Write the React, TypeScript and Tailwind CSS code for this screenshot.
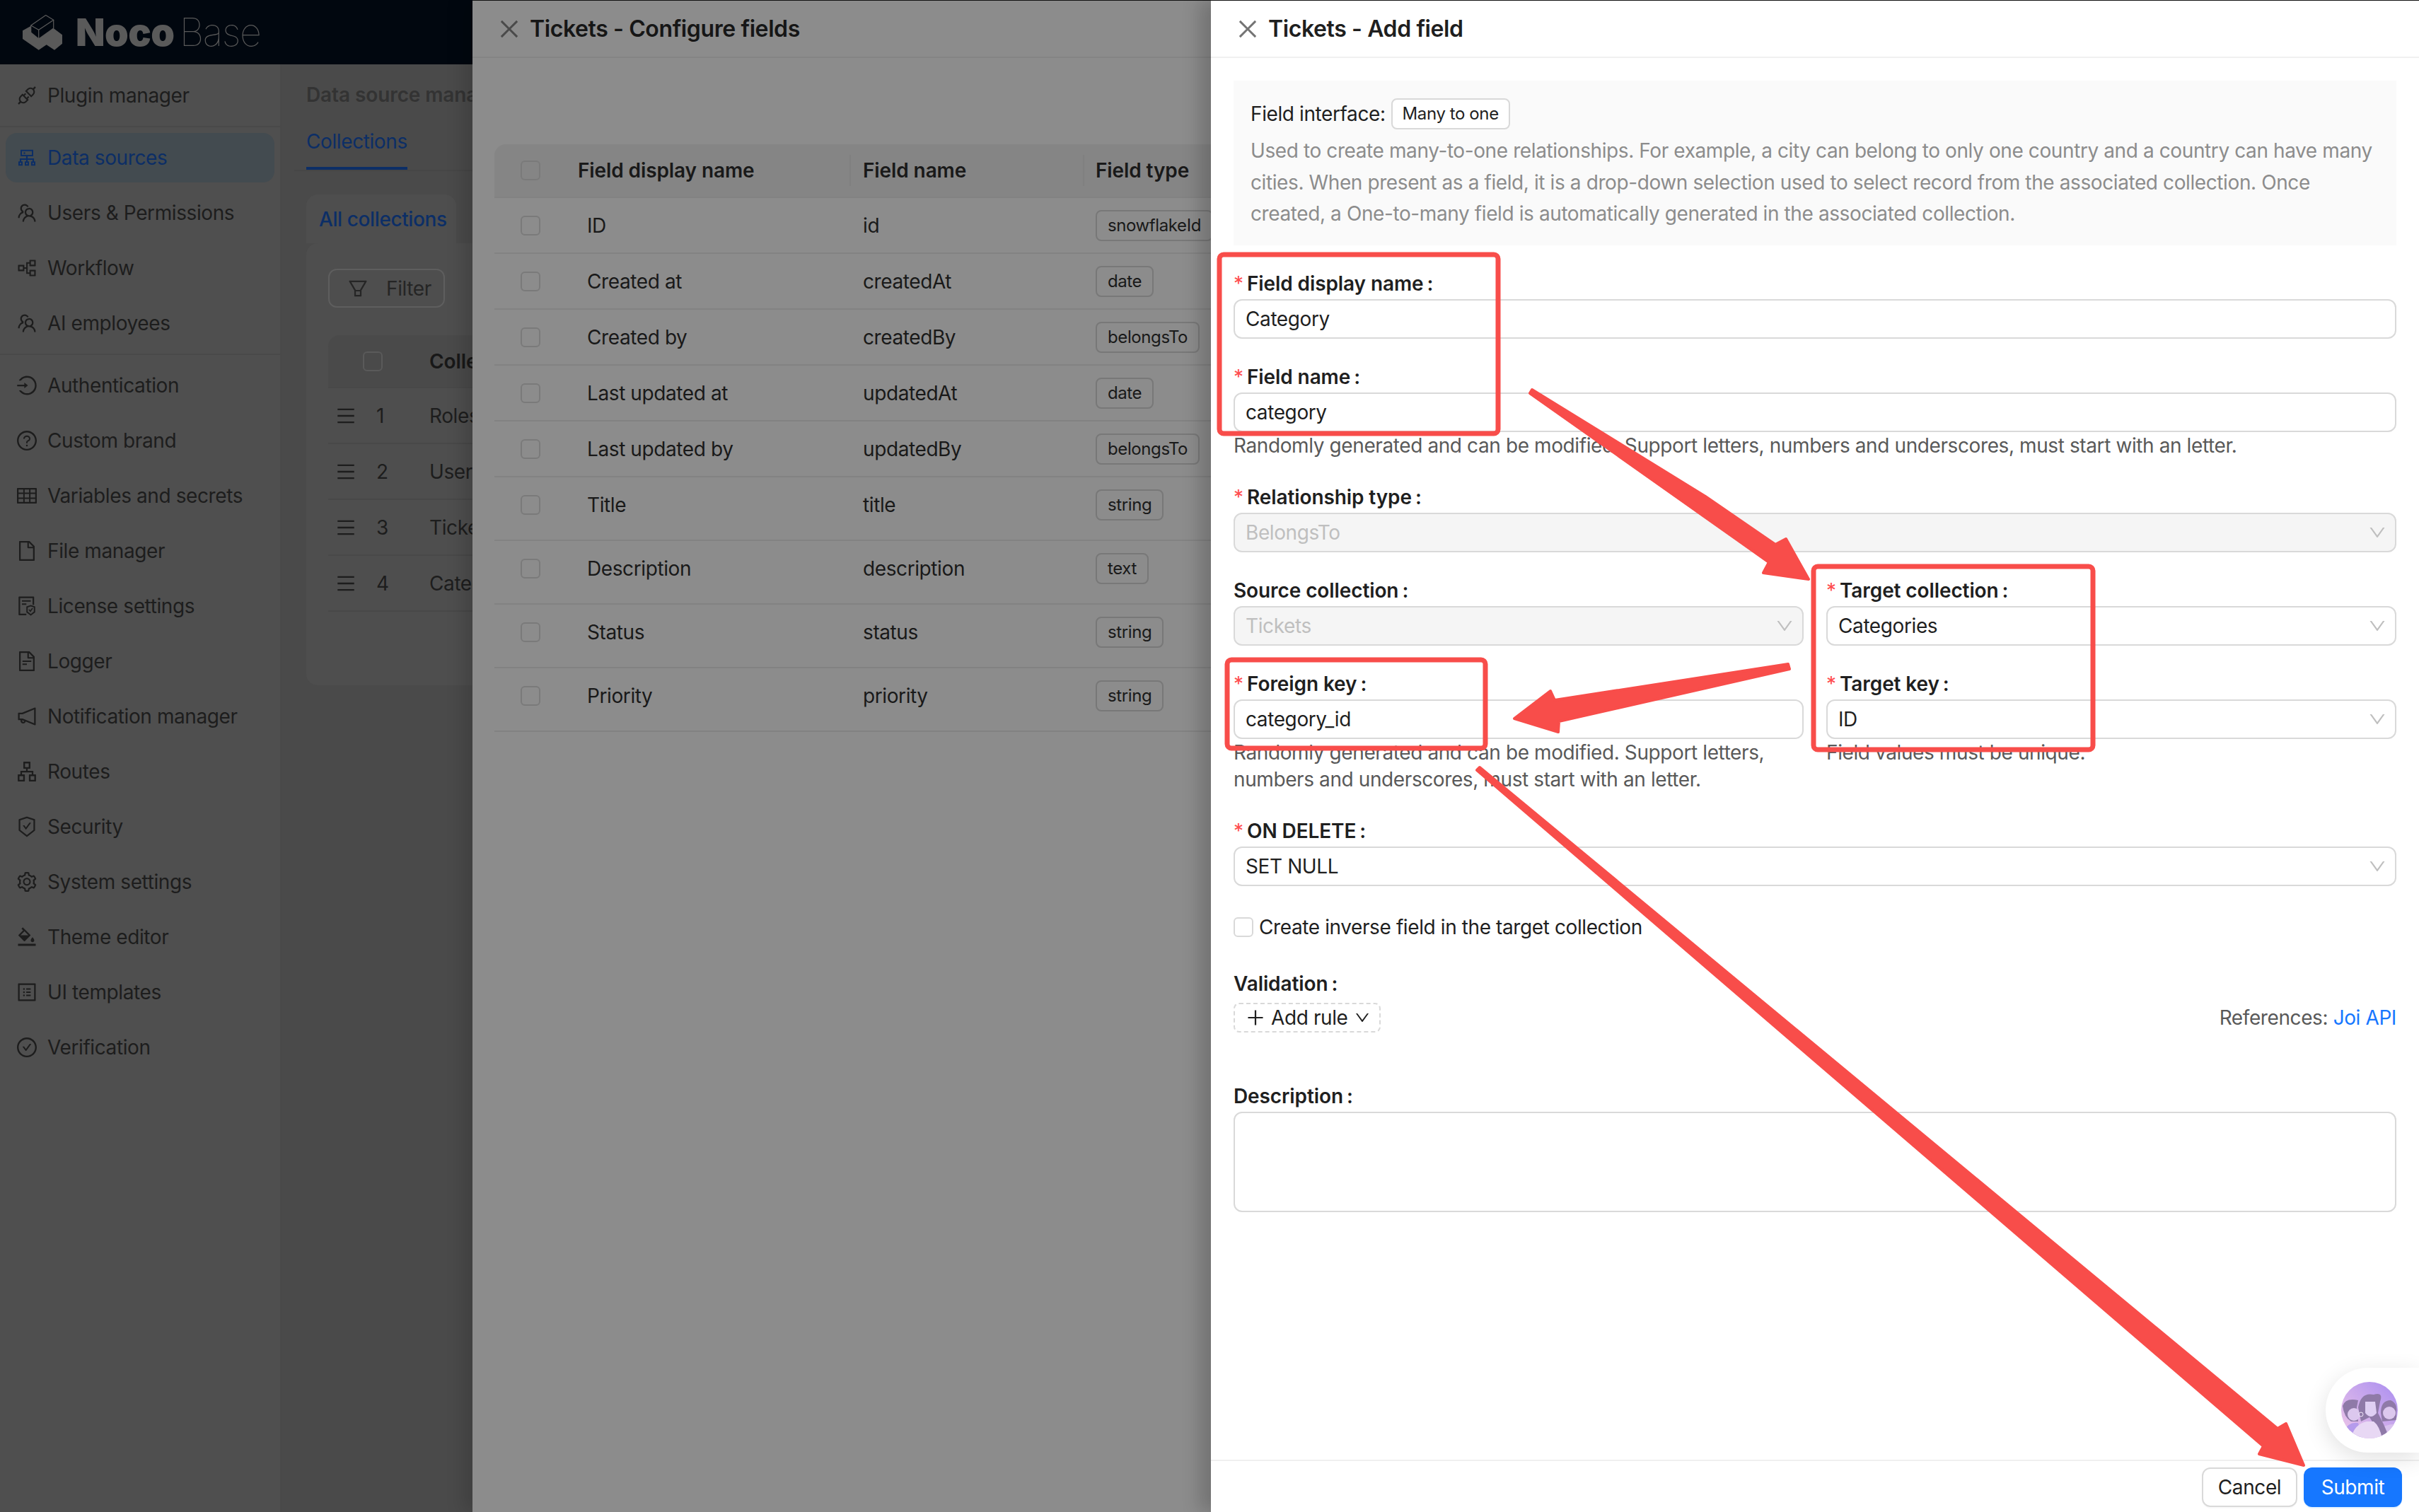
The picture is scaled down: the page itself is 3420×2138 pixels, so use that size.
import type { ReactNode } from 'react';
import {
  AiOutlineApi,
  AiOutlineApartment,
  AiOutlineBgColors,
  AiOutlineCheckCircle,
  AiOutlineClose,
  AiOutlineCluster,
  AiOutlineDown,
  AiOutlineFile,
  AiOutlineFileProtect,
  AiOutlineFileText,
  AiOutlineFilter,
  AiOutlineLogin,
  AiOutlineMenu,
  AiOutlineNotification,
  AiOutlinePartition,
  AiOutlinePlus,
  AiOutlineProfile,
  AiOutlineQuestionCircle,
  AiOutlineSafetyCertificate,
  AiOutlineSetting,
  AiOutlineTable,
  AiOutlineTeam,
} from 'react-icons/ai';

const topItems = [{ icon: AiOutlineApi, label: 'Plugin manager' }];
const midItems = [
  { icon: AiOutlineCluster, label: 'Data sources', active: true },
  { icon: AiOutlineTeam, label: 'Users & Permissions' },
  { icon: AiOutlinePartition, label: 'Workflow' },
  { icon: AiOutlineTeam, label: 'AI employees' },
];
const bottomItems = [
  { icon: AiOutlineLogin, label: 'Authentication' },
  { icon: AiOutlineQuestionCircle, label: 'Custom brand' },
  { icon: AiOutlineTable, label: 'Variables and secrets' },
  { icon: AiOutlineFile, label: 'File manager' },
  { icon: AiOutlineFileProtect, label: 'License settings' },
  { icon: AiOutlineFileText, label: 'Logger' },
  { icon: AiOutlineNotification, label: 'Notification manager' },
  { icon: AiOutlineApartment, label: 'Routes' },
  { icon: AiOutlineSafetyCertificate, label: 'Security' },
  { icon: AiOutlineSetting, label: 'System settings' },
  { icon: AiOutlineBgColors, label: 'Theme editor' },
  { icon: AiOutlineProfile, label: 'UI templates' },
  { icon: AiOutlineCheckCircle, label: 'Verification' },
];

const fieldRows = [
  { title: 'ID', name: 'id', type: 'snowflakeId', tall: false },
  { title: 'Created at', name: 'createdAt', type: 'date', tall: false },
  { title: 'Created by', name: 'createdBy', type: 'belongsTo', tall: false },
  { title: 'Last updated at', name: 'updatedAt', type: 'date', tall: false },
  { title: 'Last updated by', name: 'updatedBy', type: 'belongsTo', tall: false },
  { title: 'Title', name: 'title', type: 'string', tall: true },
  { title: 'Description', name: 'description', type: 'text', tall: true },
  { title: 'Status', name: 'status', type: 'string', tall: true },
  { title: 'Priority', name: 'priority', type: 'string', tall: true },
];

function Logo() {
  return (
    <div className="flex items-center pl-[32px] text-[#5a5a5a]">
      <svg width="56" height="50" viewBox="0 0 56 50" className="shrink-0">
        <path d="M0 22.3 L11.7 15.7 L11.7 25 L22.7 34 L43.7 19 L56 28.3 L56 40.7 L45 49.7 L33.7 42.3 L22.7 49.7 L0 34 Z" fill="currentColor" />
        <path d="M32.7 0.5 L11.7 15 L22.7 21.3 L43.7 7.3 Z M11.7 15 L11.7 25 L22.7 34 L43.7 19 L43.7 7.3 M22.7 21.3 L22.7 34" fill="none" stroke="currentColor" strokeWidth="1.2" />
      </svg>
      <span className="ml-[19px] text-[54px] font-black leading-none tracking-[-0.5px]">Noco</span>
      <span className="ml-[7px] text-[54px] font-thin leading-none tracking-[-1.4px]">Base</span>
    </div>
  );
}

function NavItem({ icon: Icon, label, active }: { icon: typeof AiOutlineApi; label: string; active?: boolean }) {
  return (
    <div className={`mx-[8px] flex h-[70px] items-center gap-[13px] rounded-[16px] pl-[14px] ${active ? 'bg-[#434b50] text-[#0c2e66]' : 'text-[#1d1d1d]'}`}>
      <Icon className="size-[32px] shrink-0" />
      <span>{label}</span>
    </div>
  );
}

function Sidebar() {
  return (
    <aside className="flex w-[398px] shrink-0 flex-col border-r-2 border-[#494949] bg-[#4f4f4f] pt-[9px]">
      <div className="flex flex-col gap-[8px]">
        {topItems.map((item) => (
          <NavItem key={item.label} {...item} />
        ))}
      </div>
      <div className="my-[8px] h-[2px] bg-[#494949]" />
      <div className="flex flex-col gap-[8px]">
        {midItems.map((item) => (
          <NavItem key={item.label} {...item} />
        ))}
      </div>
      <div className="my-[8px] h-[2px] bg-[#494949]" />
      <div className="flex flex-col gap-[8px]">
        {bottomItems.map((item) => (
          <NavItem key={item.label} {...item} />
        ))}
      </div>
    </aside>
  );
}

function CollectionRow({ n, name }: { n: number; name: string }) {
  return (
    <div className="flex h-[79px] items-center border-b-2 border-[#484848]">
      <AiOutlineMenu className="ml-[10px] size-[30px] shrink-0 text-[#1d1d1d]" />
      <span className="ml-[28px] w-[75px] text-[#1d1d1d]">{n}</span>
      <span className="text-[#1d1d1d]">{name}</span>
    </div>
  );
}

function MainArea() {
  return (
    <main className="min-w-0 flex-1 overflow-hidden bg-[#4a4a4a]">
      <div className="pl-[35px] pt-[21px] font-semibold leading-[44px] tracking-[-0.1px] text-[#333333] whitespace-nowrap">Data source manager</div>
      <div className="mt-[22px] ml-[18px] border-b-2 border-[#464646] pl-[17px]">
        <div className="inline-block border-b-4 border-[#0c2e66] pb-[14px] leading-[44px] text-[#0c2e66]">Collections</div>
      </div>
      <div className="mt-[33px] pl-[35px]">
        <div className="inline-flex h-[69px] w-[212px] items-center rounded-t-[16px] bg-[#4e4e4e] pl-[18px] font-medium whitespace-nowrap text-[#0c2e66]">All collections</div>
        <div className="h-[625px] w-[800px] rounded-tl-[16px] rounded-bl-[16px] bg-[#4e4e4e] pl-[31px] pt-[36px]">
          <div className="flex h-[55px] w-[165px] items-center gap-[24px] rounded-[12px] border-2 border-[#5e5e5e] pl-[24px] text-[#252525]">
            <AiOutlineFilter className="size-[32px]" />
            <span>Filter</span>
          </div>
          <div className="mt-[39px]">
            <div className="flex h-[75px] items-center rounded-t-[16px] border-b-2 border-[#484848] bg-[#4a4a4a]">
              <div className="ml-[49px] size-[28px] rounded-[6px] border-2 border-[#5a5a5a]" />
              <span className="ml-[66px] font-semibold tracking-[-0.1px] text-[#181818]">Collection display name</span>
            </div>
            <CollectionRow n={1} name="Roles" />
            <CollectionRow n={2} name="Users" />
            <CollectionRow n={3} name="Tickets" />
            <CollectionRow n={4} name="Categories" />
          </div>
        </div>
      </div>
    </main>
  );
}

function DrawerTitle({ title, dim }: { title: string; dim?: boolean }) {
  return (
    <div className={`flex h-[81px] shrink-0 items-center border-b-2 ${dim ? 'border-[#848484]' : 'border-[#f0f0f0]'}`}>
      <AiOutlineClose className={`ml-[34px] size-[36px] ${dim ? 'text-[#4a4a4a]' : 'text-[#737373]'}`} />
      <span className={`ml-[11px] text-[32px] font-semibold ${dim ? 'text-[#161616]' : 'text-[#1f1f1f]'}`}>{title}</span>
    </div>
  );
}

function FieldsDrawer() {
  return (
    <section className="absolute inset-y-0 left-[668px] flex w-[1044px] flex-col overflow-hidden border-t border-[#111111] bg-[#8c8c8c] text-[#191919] shadow-[-12px_0_24px_rgba(0,0,0,0.15)]">
      <DrawerTitle title="Tickets - Configure fields" dim />
      <div className="mt-[122px] w-[1140px] pl-[31px]">
        <div className="flex h-[76px] items-center rounded-t-[16px] border-b-2 border-[#828282] bg-[#858585] font-semibold tracking-[-0.1px]">
          <div className="w-[118px] pl-[37px]">
            <div className="size-[28px] rounded-[6px] border-2 border-[#7a7a7a]" />
          </div>
          <div className="w-[384px]">Field display name</div>
          <div className="flex h-[44px] w-[330px] items-center border-l-2 border-[#808080] pl-[17px]">Field name</div>
          <div className="flex h-[44px] items-center border-l-2 border-[#808080] pl-[16px]">Field type</div>
        </div>
        {fieldRows.map((row) => (
          <div key={row.name} className={`flex items-center border-b-2 border-[#828282] ${row.tall ? 'h-[90px] pb-[10px]' : 'h-[79px]'}`}>
            <div className="w-[118px] pl-[37px]">
              <div className="size-[28px] rounded-[6px] border-2 border-[#7a7a7a]" />
            </div>
            <div className="w-[403px] pl-[13px]">{row.title}</div>
            <div className="w-[329px]">{row.name}</div>
            <span className="rounded-[8px] border-2 border-[#787878] px-[15px] text-[24px] leading-[40px]">{row.type}</span>
          </div>
        ))}
      </div>
    </section>
  );
}

function Label({ text, required }: { text: string; required?: boolean }) {
  return (
    <div className="flex h-[44px] items-center font-semibold tracking-[-0.1px] text-[#1f1f1f]">
      {required && <span className="mr-[8px] w-[11px] text-[28px] font-normal text-[#ff4d4f]">*</span>}
      <span>{text}</span>
      <span className="ml-[5px]">:</span>
    </div>
  );
}

function Input({ value }: { value: string }) {
  return <div className="flex h-[56px] items-center rounded-[12px] border-2 border-[#d9d9d9] bg-white px-[15px] text-[#1f1f1f]">{value}</div>;
}

function Select({ value, disabled }: { value: string; disabled?: boolean }) {
  return (
    <div className={`flex h-[56px] items-center justify-between rounded-[12px] border-2 border-[#d9d9d9] pl-[15px] pr-[11px] ${disabled ? 'bg-[#f5f5f5] text-[#bfbfbf]' : 'bg-white text-[#1f1f1f]'}`}>
      <span>{value}</span>
      <AiOutlineDown className="size-[28px] text-[#bfbfbf]" />
    </div>
  );
}

function Help({ children }: { children: ReactNode }) {
  return <div className="text-[#595959] leading-[38px]">{children}</div>;
}

function AddFieldForm() {
  return (
    <div className="flex-1 px-[32px] pt-[32px]">
      <div className="h-[233px] bg-[#fafafa] pl-[24px] pr-[20px] pt-[25px]">
        <div className="flex h-[44px] items-center text-[#1f1f1f]">
          <span>Field interface:</span>
          <span className="ml-[8px] rounded-[8px] border-2 border-[#d9d9d9] bg-white px-[14px] text-[24px] leading-[40px]">Many to one</span>
        </div>
        <p className="mt-[8px] leading-[44.5px] whitespace-nowrap text-[#8c8c8c]">
          Used to create many-to-one relationships. For example, a city can belong to only one country and a country can have many
          <br />
          cities. When present as a field, it is a drop-down selection used to select record from the associated collection. Once
          <br />
          created, a One-to-many field is automatically generated in the associated collection.
        </p>
      </div>

      <div className="mt-[32px] flex flex-col gap-[32px]">
        <div>
          <Label text="Field display name" required />
          <Input value="Category" />
        </div>
        <div>
          <Label text="Field name" required />
          <Input value="category" />
          <Help>Randomly generated and can be modified. Support letters, numbers and underscores, must start with an letter.</Help>
        </div>
        <div>
          <Label text="Relationship type" required />
          <Select value="BelongsTo" disabled />
        </div>
        <div className="grid grid-cols-2 gap-x-[32px]">
          <div>
            <Label text="Source collection" />
            <Select value="Tickets" disabled />
          </div>
          <div>
            <Label text="Target collection" required />
            <Select value="Categories" />
          </div>
          <div className="mt-[32px]">
            <Label text="Foreign key" required />
            <Input value="category_id" />
            <Help>
              Randomly generated and can be modified. Support letters,
              <br />
              numbers and underscores, must start with an letter.
            </Help>
          </div>
          <div className="mt-[32px]">
            <Label text="Target key" required />
            <Select value="ID" />
            <Help>Field values must be unique.</Help>
          </div>
        </div>
        <div>
          <Label text="ON DELETE" required />
          <Select value="SET NULL" />
        </div>
        <div className="flex h-[52px] items-center gap-[8px] text-[#1f1f1f]">
          <div className="size-[28px] rounded-[6px] border-2 border-[#d9d9d9] bg-white" />
          <span>Create inverse field in the target collection</span>
        </div>
        <div>
          <Label text="Validation" />
          <div className="mt-[5px] flex items-center justify-between">
            <div className="flex h-[42px] w-[208px] items-center rounded-[8px] border-2 border-dashed border-[#d9d9d9] pl-[14px] text-[#1f1f1f]">
              <AiOutlinePlus className="size-[30px] shrink-0" />
              <span className="ml-[7px]">Add rule</span>
              <AiOutlineDown className="ml-[8px] size-[24px] shrink-0" />
            </div>
            <div className="text-[#595959]">
              References: <span className="text-[#1677ff]">Joi API</span>
            </div>
          </div>
        </div>
        <div className="mt-[36px]">
          <Label text="Description" />
          <div className="h-[142px] rounded-[12px] border-2 border-[#d9d9d9] bg-white" />
        </div>
      </div>
    </div>
  );
}

function AddFieldDrawer() {
  return (
    <section className="absolute inset-y-0 right-0 flex w-[1708px] flex-col border-t border-[#111111] bg-white shadow-[-16px_0_24px_rgba(0,0,0,0.18)]">
      <DrawerTitle title="Tickets - Add field" />
      <AddFieldForm />
      <div className="flex h-[74px] shrink-0 justify-end gap-[9px] border-t-2 border-[#f0f0f0] pr-[24px] pt-[9px]">
        <div className="flex h-[56px] w-[135px] items-center justify-center rounded-[12px] border-2 border-[#d9d9d9] text-[#1f1f1f] shadow-[0_2px_0_rgba(0,0,0,0.02)]">Cancel</div>
        <div className="flex h-[56px] w-[139px] items-center justify-center rounded-[12px] bg-[#1677ff] text-white shadow-[0_2px_0_rgba(5,145,255,0.1)]">Submit</div>
      </div>
    </section>
  );
}

function ChatBubble() {
  return (
    <div className="absolute right-0 top-[1934px] flex h-[120px] w-[132px] items-center rounded-l-[60px] bg-white pl-[22px] shadow-[0_8px_32px_rgba(0,0,0,0.12)]">
      <svg width="80" height="80" viewBox="0 0 80 80">
        <defs>
          <linearGradient id="aiBg" x1="0" y1="1" x2="1" y2="0">
            <stop offset="0" stopColor="#f0c8e8" />
            <stop offset="1" stopColor="#a98df0" />
          </linearGradient>
          <clipPath id="aiClip">
            <circle cx="40" cy="40" r="40" />
          </clipPath>
        </defs>
        <g clipPath="url(#aiClip)">
          <rect width="80" height="80" fill="url(#aiBg)" />
          <path d="M2 34 Q6 22 24 26 L22 36 L24 56 L14 56 Q4 50 2 34Z" fill="#8f7aa8" />
          <circle cx="18" cy="46" r="9" fill="#dcc8ee" />
          <path d="M4 70 Q10 56 24 58 L30 80 L4 80Z" fill="#b59bec" />
          <path d="M56 44 Q56 26 70 26 Q80 30 78 44 L78 54 L58 56Z" fill="#8f7aa8" />
          <circle cx="68" cy="44" r="9" fill="#dcc8ee" />
          <path d="M54 70 Q62 58 80 60 L80 80 L54 80Z" fill="#d8c2ee" />
          <path d="M24 36 Q28 14 46 18 Q60 14 55 28 L52 44 L60 60 L66 74 L58 78 L40 50 L28 56 Z" fill="#8f7aa8" />
          <path d="M34 28 L48 28 L50 44 Q42 54 34 44Z" fill="#dfcff3" />
          <path d="M14 80 Q18 60 36 56 L46 56 Q54 62 58 80Z" fill="#e8d8f4" />
          <circle cx="28" cy="46" r="3" fill="none" stroke="#f2e8fa" strokeWidth="1" />
        </g>
      </svg>
    </div>
  );
}

// the red review marks drawn over the screenshot
function Annotations() {
  const red = '#f84d4a';
  return (
    <svg width="3420" height="2138" viewBox="0 0 3420 2138" className="pointer-events-none absolute inset-0">
      <g fill="none" stroke={red} strokeWidth="7">
        <rect x="1724" y="360" width="394" height="253" rx="6" />
        <rect x="1735" y="933" width="365" height="125" rx="6" />
        <rect x="2564" y="801" width="395" height="259" rx="6" />
      </g>
      <g fill={red} stroke={red} strokeWidth="4" strokeLinejoin="round">
        <polygon points="2166,551 2411,702 2510,770 2525,762 2557,819 2493,810 2501,795 2163,556" />
        <polygon points="2528,939 2530,946 2204,1020 2203,1035 2141,1016 2192,977 2198,990" />
        <polygon points="2092,1085 3220,2020 3232,2013 3257,2072 3194,2056 3200,2045 2088,1089" />
      </g>
    </svg>
  );
}

export default function App() {
  return (
    <div className="relative h-[2138px] w-[3420px] overflow-hidden bg-[#4a4a4a] font-['Inter',sans-serif] text-[28px] tracking-[-0.4px]">
      <header className="flex h-[91px] items-center bg-[#01070f]">
        <Logo />
      </header>
      <div className="flex h-[2047px]">
        <Sidebar />
        <MainArea />
      </div>
      <FieldsDrawer />
      <AddFieldDrawer />
      <ChatBubble />
      <Annotations />
    </div>
  );
}
